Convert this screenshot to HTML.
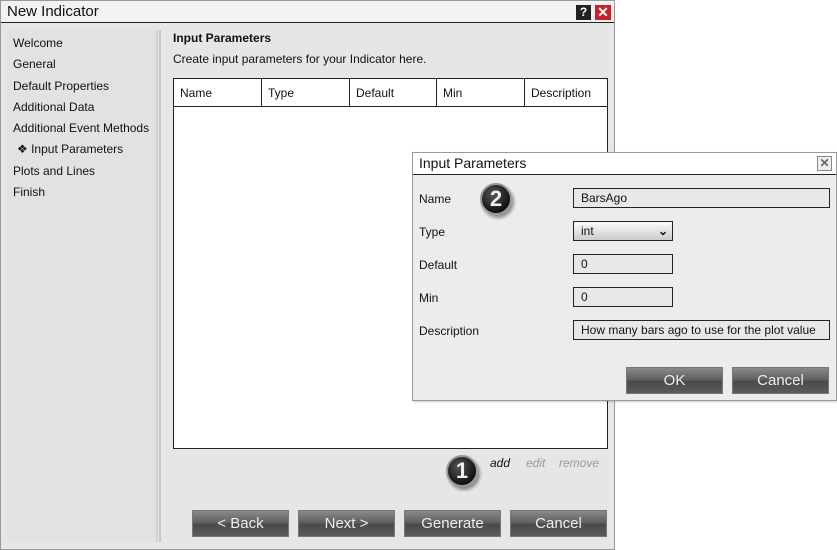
<!DOCTYPE html>
<html><head><style>
*{margin:0;padding:0;box-sizing:border-box}
body{width:837px;height:550px;background:#fff;position:relative;overflow:hidden;font-family:"Liberation Sans",sans-serif;font-size:12px;color:#111}
.a{position:absolute}
.btn{position:absolute;height:27px;width:97px;border:1px solid #777;background:linear-gradient(#8a8a8a,#5c5c5c 50%,#4a4a4a 51%,#5a5a5a);color:#eee;font-size:15px;text-align:center;line-height:25px}
.inp{position:absolute;border:1px solid #222;background:#e8e8e8;height:20px;padding-left:7px;line-height:18px;font-size:12px}
.nav div{height:21.3px;line-height:21px}
.badge{position:absolute;width:32px;height:32px;border-radius:50%;background:radial-gradient(circle at 40% 35%,#555,#111 70%);border:2px solid #999;box-shadow:2px 3px 3px rgba(0,0,0,.4);color:#eee;font-weight:bold;font-size:22px;text-align:center;line-height:28px}
</style></head><body>
<div class="a" style="left:0;top:0;width:615px;height:550px;background:#e6e6e6;border:1px solid #999"></div>
<div class="a" style="left:1px;top:1px;width:613px;height:22px;background:#f2f2f2;border-bottom:1px solid #222;font-size:15px;line-height:22px;padding-left:6px">New Indicator</div>
<div class="a" style="left:576px;top:5px;width:15px;height:15px;background:#222;color:#fff;font-weight:bold;font-size:12px;text-align:center;line-height:15px">?</div>
<div class="a" style="left:595px;top:5px;width:16px;height:15px;background:#c8202a;color:#fff;font-weight:bold;font-size:14px;text-align:center;line-height:15px">✕</div>
<div class="a nav" style="left:7px;top:30px;width:151px;height:512px;background:#e2e2e2;padding:3px 0 0 6px;border-right:2px solid #d0d0d0">
<div>Welcome</div><div>General</div><div>Default Properties</div><div>Additional Data</div><div>Additional Event Methods</div><div style="padding-left:4px">❖ Input Parameters</div><div>Plots and Lines</div><div>Finish</div></div>
<div class="a" style="left:159px;top:30px;width:2px;height:512px;background:#c8c8c8"></div>
<div class="a" style="left:173px;top:31px;font-weight:bold">Input Parameters</div>
<div class="a" style="left:173px;top:52px">Create input parameters for your Indicator here.</div>
<div class="a" style="left:173px;top:78px;width:435px;height:371px;background:#fff;border:1px solid #222"></div>
<div class="a" style="left:173px;top:78px;width:435px;height:29px;border:1px solid #222;display:flex">
<div style="width:88px;border-right:1px solid #222;padding:7px 6px">Name</div><div style="width:88px;border-right:1px solid #222;padding:7px 6px">Type</div><div style="width:87px;border-right:1px solid #222;padding:7px 6px">Default</div><div style="width:88px;border-right:1px solid #222;padding:7px 6px">Min</div><div style="padding:7px 6px">Description</div></div>
<div class="badge" style="left:446px;top:455px">1</div>
<div class="a" style="left:490px;top:456px;font-style:italic">add</div>
<div class="a" style="left:526px;top:456px;font-style:italic;color:#999">edit</div>
<div class="a" style="left:559px;top:456px;font-style:italic;color:#999">remove</div>
<div class="btn" style="left:192px;top:510px">&lt; Back</div>
<div class="btn" style="left:298px;top:510px">Next &gt;</div>
<div class="btn" style="left:404px;top:510px">Generate</div>
<div class="btn" style="left:510px;top:510px">Cancel</div>
<div class="a" style="left:412px;top:152px;width:425px;height:249px;background:#ececec;border:1px solid #999;box-shadow:1px 1px 2px rgba(0,0,0,.2)"></div>
<div class="a" style="left:413px;top:153px;width:423px;height:22px;background:#fff;border-bottom:1px solid #222;font-size:14px;line-height:21px;padding-left:6px">Input Parameters</div>
<div class="a" style="left:817px;top:156px;width:15px;height:15px;border:1px solid #888;color:#666;font-weight:bold;font-size:12px;text-align:center;line-height:13px;background:#eee">✕</div>
<div class="a" style="left:419px;top:192px">Name</div>
<div class="a" style="left:419px;top:225px">Type</div>
<div class="a" style="left:419px;top:258px">Default</div>
<div class="a" style="left:419px;top:291px">Min</div>
<div class="a" style="left:419px;top:324px">Description</div>
<div class="badge" style="left:480px;top:183px">2</div>
<div class="inp" style="left:573px;top:188px;width:257px">BarsAgo</div>
<div class="inp" style="left:573px;top:221px;width:100px;background:linear-gradient(#fafafa,#ccc)">int<span style="position:absolute;right:4px;top:0;font-weight:bold">⌄</span></div>
<div class="inp" style="left:573px;top:254px;width:100px">0</div>
<div class="inp" style="left:573px;top:287px;width:100px">0</div>
<div class="inp" style="left:573px;top:320px;width:257px">How many bars ago to use for the plot value</div>
<div class="btn" style="left:626px;top:367px">OK</div>
<div class="btn" style="left:732px;top:367px">Cancel</div>
</body></html>
